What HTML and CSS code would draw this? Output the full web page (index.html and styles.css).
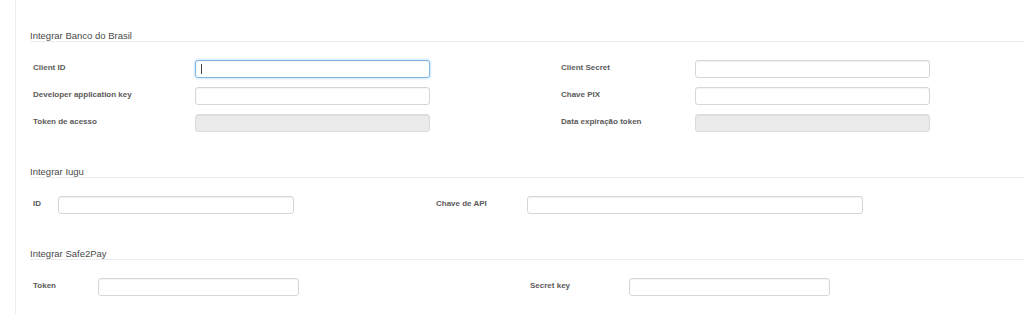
FILE: index.html
```html
<!DOCTYPE html>
<html lang="pt-BR">
<head>
    <meta charset="UTF-8">
    <meta name="viewport" content="width=device-width, initial-scale=1.0">
    <title>Integrações</title>
    <link rel="stylesheet" href="styles.css">
</head>
<body>
    <div class="panel">
        <!-- Banco do Brasil -->
        <div class="section section-bb">
            <div class="section-title">Integrar Banco do Brasil</div>
            <div class="form-grid">
                <label>Client ID</label>
                <div class="caret-wrap">
                    <input type="text" class="focused">
                </div>
                <span></span>
                <label>Client Secret</label>
                <input type="text">

                <label>Developer application key</label>
                <input type="text">
                <span></span>
                <label>Chave PIX</label>
                <input type="text">

                <label>Token de acesso</label>
                <input type="text" disabled>
                <span></span>
                <label>Data expiração token</label>
                <input type="text" disabled>
            </div>
        </div>

        <!-- Iugu -->
        <div class="section section-iugu">
            <div class="section-title">Integrar Iugu</div>
            <div class="form-grid">
                <label>ID</label>
                <input type="text">
                <span></span>
                <label>Chave de API</label>
                <input type="text">
            </div>
        </div>

        <!-- Safe2Pay -->
        <div class="section section-safe">
            <div class="section-title">Integrar Safe2Pay</div>
            <div class="form-grid">
                <label>Token</label>
                <input type="text">
                <span></span>
                <label>Secret key</label>
                <input type="text">
            </div>
        </div>
    </div>
</body>
</html>
```

FILE: styles.css
```css
/* General */
body {
    margin: 0;
    font-family: "Liberation Sans", Arial, sans-serif;
    background: #fff;
    color: #333;
}

/* Panel with left rule */
.panel {
    margin-left: 15px;
    border-left: 1px solid #ededed;
    padding-left: 14px;
    padding-top: 30px;
    min-height: 284px;
}

/* Section */
.section {
    margin-bottom: 34px;
}

.section-title {
    font-size: 9.5px;
    line-height: 11px;
    color: #4a4a4a;
    border-bottom: 1px solid #ececec;
}

/* Form rows */
.form-grid {
    display: grid;
    row-gap: 9px;
    align-items: center;
    padding-top: 18px;
    padding-left: 3px;
}

.section-bb .form-grid {
    grid-template-columns: 162px 235px 131px 134px 235px;
}

.section-iugu .form-grid {
    grid-template-columns: 25px 236px 142px 91px 336px;
}

.section-safe .form-grid {
    grid-template-columns: 65px 201px 231px 99px 201px;
}

.form-grid label {
    font-size: 8px;
    font-weight: bold;
    color: #5a5a5a;
    line-height: 10px;
    margin-top: -2px;
}

.form-grid input {
    box-sizing: border-box;
    display: block;
    height: 18px;
    width: 100%;
    margin: 0;
    padding: 0 4px;
    font-size: 9px;
    border: 1px solid #d6d6d6;
    border-radius: 3px;
    box-shadow: inset 0 1px 1px rgba(0, 0, 0, 0.05);
    background: #fff;
    outline: none;
}

.form-grid input.focused {
    border-color: #7fb6e6;
    box-shadow: inset 0 1px 1px rgba(0, 0, 0, 0.05), 0 0 3px rgba(102, 175, 233, 0.6);
}

.form-grid input:disabled {
    background: #ebebeb;
    border-color: #dcdcdc;
}

/* Text caret in the focused field */
.caret-wrap {
    position: relative;
}

.caret-wrap::after {
    content: "";
    position: absolute;
    left: 6px;
    top: 4px;
    width: 1px;
    height: 10px;
    background: #444;
}
```
